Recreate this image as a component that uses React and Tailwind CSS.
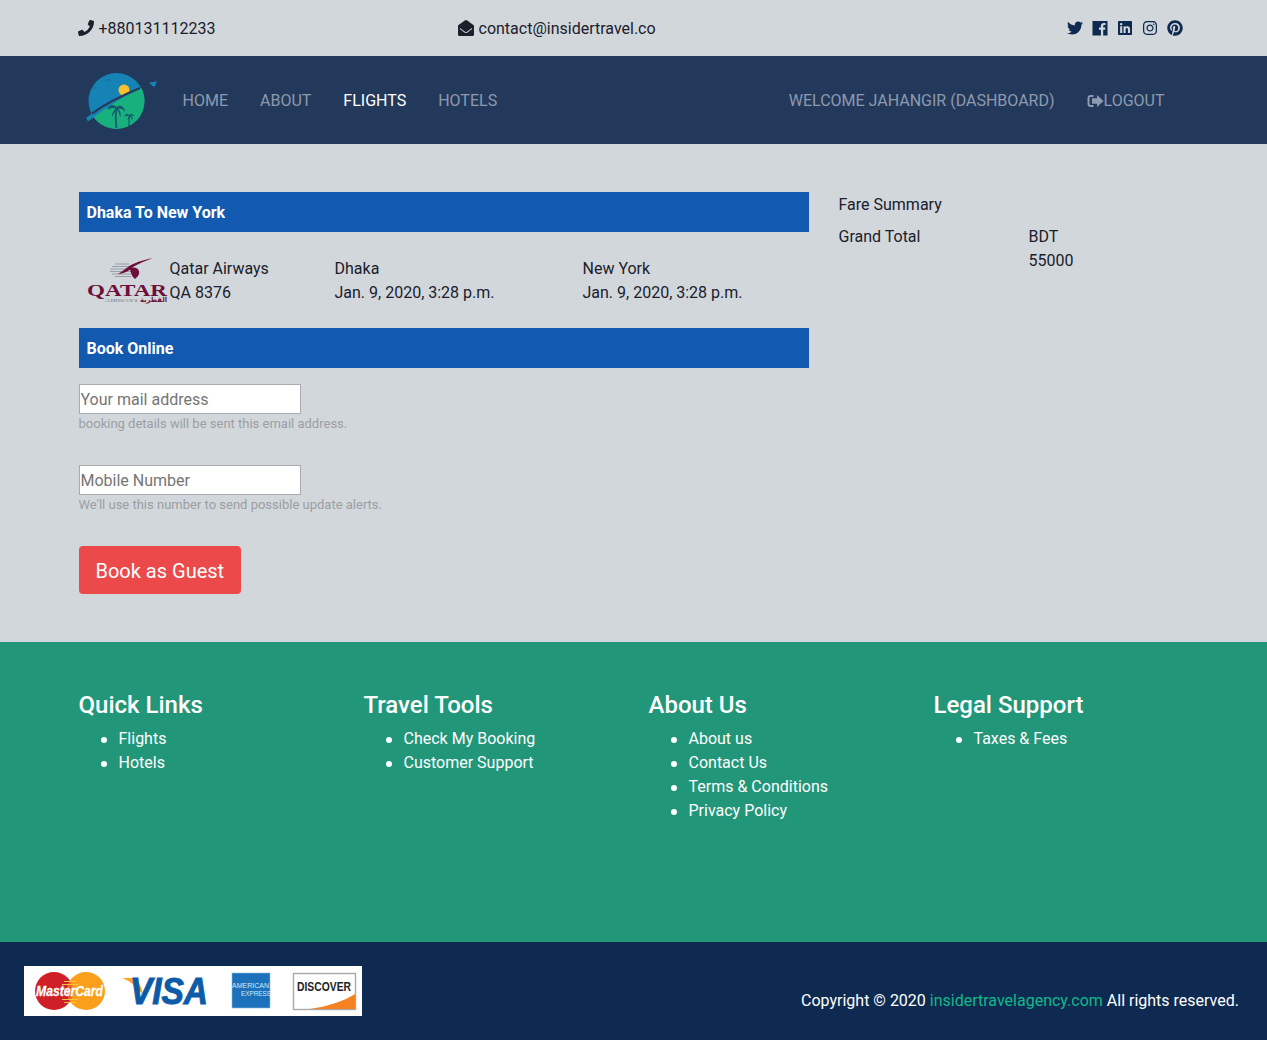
import { FaPhoneAlt, FaEnvelopeOpen, FaTwitter, FaLinkedin, FaInstagram, FaPinterest } from "react-icons/fa";

const footerColumns = [
  { title: "Quick Links", links: ["Flights", "Hotels"] },
  { title: "Travel Tools", links: ["Check My Booking", "Customer Support"] },
  { title: "About Us", links: ["About us", "Contact Us", "Terms & Conditions", "Privacy Policy"] },
  { title: "Legal Support", links: ["Taxes & Fees"] },
];

function BrandLogo() {
  return (
    <svg width="88" height="64" viewBox="0 0 88 64" className="block">
      <defs>
        <clipPath id="globe">
          <circle cx="37.5" cy="33" r="28" />
        </clipPath>
      </defs>
      <g clipPath="url(#globe)">
        <rect x="0" y="0" width="88" height="64" fill="#1583b4" />
        <path d="M0 52 Q 30 32 70 17 L70 64 L0 64 Z" fill="#18b07c" />
      </g>
      <circle cx="45" cy="22" r="5.500" fill="#fbc02d" />
      <path d="M7 50 Q 28 33 61 20 Q 34 34 9 53.500 Z" fill="#1583b4" />
      <path d="M13 45.500 Q 30 33 61 20" fill="none" stroke="#243b5f" strokeWidth="2.400" />
      <path d="M70 14.500 L78 13.500 L75.500 19 L73 17.500 Z" fill="#1583b4" />
      <path d="M13 20 h6 M27 12 h5" stroke="#1b6f99" strokeWidth="1" />
      <path d="M37.500 60 C 36.500 52, 36.500 46, 37.500 40" fill="none" stroke="#17566f" strokeWidth="1.800" />
      <path d="M37.500 39 C 33 35, 29 38, 28.500 42 C 32 39.500, 35 39.500, 37 41 C 34.500 42.500, 32.500 46, 33 49 C 35 45, 36.500 43, 37.500 41.500 C 39.500 43.500, 41 46, 41 50 C 42.500 46, 41.500 43, 39 41 C 42 40, 44.500 41, 46 44 C 46 39.500, 42 35.500, 37.500 39 Z" fill="#17566f" />
      <path d="M50 58 C 50 54, 50 51, 50.500 47" fill="none" stroke="#17566f" strokeWidth="1.200" />
      <path d="M50.500 47 C 48 45, 45.500 46, 45.500 48.500 C 47.500 47.500, 49 47.500, 50.500 48 C 49 49.500, 48.500 51, 48.500 52 C 50 51, 51 50, 51 48.500 C 52 49.500, 53 51, 53 52.500 C 54.500 50, 53.500 48.500, 51.500 48 C 53 47.500, 54.500 47.500, 55.500 48.500 C 54.500 46, 52 45, 50.500 47 Z" fill="#17566f" />
    </svg>
  );
}

function QatarLogo() {
  return (
    <svg width="83" height="48" viewBox="0 0 83 48" className="block">
      <g stroke="#9a9ea5" strokeWidth="1">
        <path d="M28 7 h14 M25 9.500 h20 M23 12 h22 M23 14.500 h24 M25 17 h20 M28 19.500 h16" />
      </g>
      <path d="M66 1 C 56 3, 46 6, 41 10 C 37 13, 34 15, 31 17 C 36 16.500, 40 15, 43 12.500 C 44 16, 45 20, 48 22 C 50 20, 53 18, 52 14 C 51 11, 48 10, 45 10.500 C 51 7, 58 4, 66 1 Z" fill="#6d0f3a" />
      <text x="0" y="39" fontFamily="Liberation Serif, serif" fontWeight="700" fontSize="16" fill="#6d0f3a" textLength="80" lengthAdjust="spacingAndGlyphs">QATAR</text>
      <text x="18" y="44.500" fontFamily="Liberation Serif, serif" fontSize="4.500" fill="#777c84" textLength="33" lengthAdjust="spacingAndGlyphs">AIRWAYS</text>
      <text x="53" y="45" fontFamily="DejaVu Sans, sans-serif" fontWeight="700" fontSize="7" fill="#6d0f3a" textLength="27" lengthAdjust="spacingAndGlyphs">القطرية</text>
    </svg>
  );
}

function CardLogos() {
  return (
    <svg width="338" height="50" viewBox="0 0 338 50" className="block bg-white">
      {/* mastercard */}
      <circle cx="30" cy="25" r="19" fill="#cf2027" />
      <circle cx="62" cy="25" r="19" fill="#f99f1b" />
      <path d="M46 14.500 a19 19 0 0 1 0 21 a19 19 0 0 1 0 -21 Z" fill="#e8632a" />
      <path d="M40 15.500 h12 M38 18.500 h16 M38 33.500 h16 M40 36.500 h12" stroke="#f7c33d" strokeWidth="1" />
      <text x="12" y="30" fontFamily="Liberation Sans, sans-serif" fontWeight="700" fontStyle="italic" fontSize="15" fill="#ffffff" stroke="#ffffff" strokeWidth="0.300" textLength="67" lengthAdjust="spacingAndGlyphs">MasterCard</text>
      {/* visa */}
      <path d="M98 12 L111 12 C 115 16, 118 22, 119 29 C 113 21, 106 15, 98 12 Z" fill="#f7a823" />
      <text x="106" y="38" fontFamily="Liberation Sans, sans-serif" fontWeight="700" fontStyle="italic" fontSize="36" fill="#0d5ba6" stroke="#0d5ba6" strokeWidth="1" textLength="78" lengthAdjust="spacingAndGlyphs">VISA</text>
      {/* amex */}
      <rect x="208" y="7" width="38" height="35" fill="#1b71bc" stroke="#8fbbe0" strokeWidth="0.600" />
      <text x="208" y="22" fontFamily="Liberation Sans, sans-serif" fontSize="7" fill="#d9e9f6" textLength="37" lengthAdjust="spacingAndGlyphs">AMERICAN</text>
      <text x="217" y="30" fontFamily="Liberation Sans, sans-serif" fontSize="7" fill="#d9e9f6" textLength="30" lengthAdjust="spacingAndGlyphs">EXPRESS</text>
      {/* discover */}
      <rect x="269.500" y="7.500" width="62" height="36" fill="#ffffff" stroke="#a8a8a8" strokeWidth="1.400" />
      <path d="M286 43 C 305 40, 320 35, 331 28 L331 43 Z" fill="#f58220" />
      <text x="273" y="25" fontFamily="Liberation Sans, sans-serif" fontWeight="700" fontSize="12" fill="#222222" textLength="54" lengthAdjust="spacingAndGlyphs">DISCOVER</text>
    </svg>
  );
}

function LogoutIcon() {
  return (
    <svg width="17" height="14" viewBox="0 0 17 14" fill="currentColor" className="block">
      <path d="M6.500 1 H3.500 C1.800 1 0.500 2.300 0.500 4 V10 C0.500 11.700 1.800 13 3.500 13 H6.500 V11 H3.800 C3 11 2.500 10.500 2.500 9.700 V4.300 C2.500 3.500 3 3 3.800 3 H6.500 Z" />
      <path d="M10 1 L16.500 7 L10 13 V9.800 H5 V4.200 H10 Z" />
    </svg>
  );
}

function FacebookSquareIcon() {
  return (
    <svg width="16" height="16" viewBox="0 0 16 16" className="block">
      <path
        fillRule="evenodd"
        fill="currentColor"
        d="M0.500 1 H15.500 V15.500 H11.200 V9.800 H13.100 L13.400 7.500 H11.200 V6.100 C11.200 5.400 11.400 5 12.400 5 H13.500 V3 C13.300 3 12.600 2.900 11.800 2.900 C10.100 2.900 8.900 3.900 8.900 5.800 V7.500 H7 V9.800 H8.900 V15.500 H0.500 Z"
      />
    </svg>
  );
}

export default function App() {
  return (
    <div className="min-h-[1040px] bg-[#d2d7db] font-['Roboto',sans-serif] text-base leading-6 text-[#1a202c]">
      {/* top bar */}
      <div className="h-14">
        <div className="mx-auto grid h-full w-[1110px] grid-cols-[380px_380px_350px] items-center">
          <div className="-ml-px flex items-center gap-[5px]">
            <FaPhoneAlt className="h-4 w-4 -scale-x-100" />
            <span className="pt-[2px]">+880131112233</span>
          </div>
          <div className="-ml-px flex items-center gap-[5px]">
            <FaEnvelopeOpen className="h-4 w-4" />
            <span className="pt-[2px]">contact@insidertravel.co</span>
          </div>
          <div className="flex items-center justify-end gap-[9px] pr-[6px] text-[#0f2a50]">
            <FaTwitter className="h-4 w-4" />
            <FacebookSquareIcon />
            <FaLinkedin className="h-4 w-4" />
            <FaInstagram className="h-4 w-4" />
            <FaPinterest className="h-4 w-4" />
          </div>
        </div>
      </div>

      {/* nav */}
      <nav className="h-[88px] bg-[#23395b]">
        <div className="mx-auto flex h-full w-[1110px] items-center justify-between pr-2 text-[#8d99ae]">
          <div className="flex items-center">
            <BrandLogo />
            <a className="px-4 pt-[2px]">HOME</a>
            <a className="px-4 pt-[2px]">ABOUT</a>
            <a className="px-4 pt-[2px] text-white">FLIGHTS</a>
            <a className="px-4 pt-[2px]">HOTELS</a>
          </div>
          <div className="flex items-center">
            <a className="px-4 pt-[2px]">WELCOME JAHANGIR (DASHBOARD)</a>
            <a className="flex items-center px-4 pt-[2px]">
              <LogoutIcon />
              LOGOUT
            </a>
          </div>
        </div>
      </nav>

      {/* main */}
      <main className="mx-auto flex w-[1110px] pt-12 pb-12">
        <div className="w-[730px]">
          <h2 className="flex h-10 items-center bg-[#1259b0] px-2 pt-[2px] font-bold text-white">Dhaka To New York</h2>

          <div className="flex pt-[25px] pb-[23px]">
            <div className="flex w-[256px] items-center pl-2">
              <QatarLogo />
              <div>
                <p>Qatar Airways</p>
                <p>QA 8376</p>
              </div>
            </div>
            <div className="w-[248px]">
              <p>Dhaka</p>
              <p>Jan. 9, 2020, 3:28 p.m.</p>
            </div>
            <div>
              <p>New York</p>
              <p>Jan. 9, 2020, 3:28 p.m.</p>
            </div>
          </div>

          <h2 className="flex h-10 items-center bg-[#1259b0] px-2 pt-[2px] font-bold text-white">Book Online</h2>

          <form className="mt-4">
            <input
              type="text"
              placeholder="Your mail address"
              className="block h-[30px] w-[222px] border border-[#a9abb0] bg-white px-px placeholder:text-[#757575]"
            />
            <small className="block h-[19px] text-[13px] leading-[19px] text-[#9b9fa3]">
              booking details will be sent this email address.
            </small>
            <input
              type="text"
              placeholder="Mobile Number"
              className="mt-8 block h-[30px] w-[222px] border border-[#a9abb0] bg-white px-px placeholder:text-[#757575]"
            />
            <small className="block h-[19px] text-[13px] leading-[19px] text-[#9b9fa3]">
              We'll use this number to send possible update alerts.
            </small>
            <button type="button" className="mt-8 h-12 rounded bg-[#ec4a4a] px-[17px] pt-[2px] text-xl text-white">
              Book as Guest
            </button>
          </form>
        </div>

        <aside className="ml-[30px] w-[350px] pt-px">
          <p>Fare Summary</p>
          <div className="mt-2 flex">
            <p className="w-[190px]">Grand Total</p>
            <p className="w-[60px]">BDT 55000</p>
          </div>
        </aside>
      </main>

      {/* footer */}
      <footer className="h-[300px] bg-[#229678] pt-12 text-white">
        <div className="mx-auto grid w-[1110px] grid-cols-[285px_285px_285px_255px]">
          {footerColumns.map((col) => (
            <div key={col.title}>
              <h3 className="mb-[7px] text-2xl leading-[30px] font-medium">{col.title}</h3>
              <ul className="pl-[22px]">
                {col.links.map((link) => (
                  <li key={link} className="flex items-center gap-3">
                    <span className="mt-px h-1.5 w-1.5 rounded-full bg-white" />
                    {link}
                  </li>
                ))}
              </ul>
            </div>
          ))}
        </div>
      </footer>

      {/* bottom bar */}
      <div className="flex h-[98px] items-center justify-between bg-[#0f2a50] pr-7 pl-6 text-white">
        <CardLogos />
        <p className="mt-[20px]">
          Copyright © 2020 <a className="text-[#14b88a]">insidertravelagency.com</a> All rights reserved.
        </p>
      </div>
    </div>
  );
}
